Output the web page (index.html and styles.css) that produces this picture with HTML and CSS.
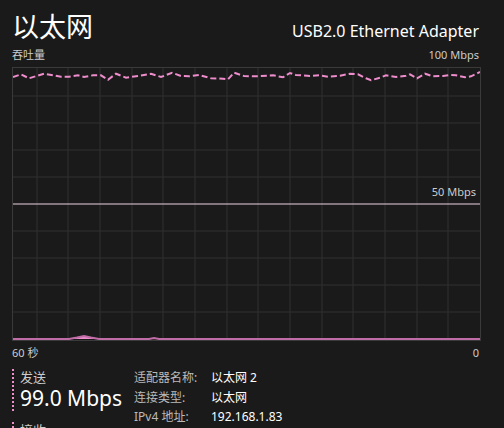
FILE: index.html
```html
<!DOCTYPE html>
<html lang="zh-CN">
<head>
    <meta charset="UTF-8">
    <title>以太网</title>
    <link rel="stylesheet" href="styles.css">
</head>
<body>
    <div class="panel">
        <div class="header">
            <h1>以太网</h1>
            <div class="adapter">USB2.0 Ethernet Adapter</div>
        </div>
        <div class="axis-top">
            <span>吞吐量</span>
            <span>100 Mbps</span>
        </div>
        <div class="graph">
            <svg width="467" height="272" viewBox="0 0 467 272">
                <g class="grid">
                    <line x1="24" y1="0" x2="24" y2="272"/>
                    <line x1="55" y1="0" x2="55" y2="272"/>
                    <line x1="87" y1="0" x2="87" y2="272"/>
                    <line x1="119" y1="0" x2="119" y2="272"/>
                    <line x1="150" y1="0" x2="150" y2="272"/>
                    <line x1="182" y1="0" x2="182" y2="272"/>
                    <line x1="214" y1="0" x2="214" y2="272"/>
                    <line x1="245" y1="0" x2="245" y2="272"/>
                    <line x1="277" y1="0" x2="277" y2="272"/>
                    <line x1="309" y1="0" x2="309" y2="272"/>
                    <line x1="340" y1="0" x2="340" y2="272"/>
                    <line x1="372" y1="0" x2="372" y2="272"/>
                    <line x1="404" y1="0" x2="404" y2="272"/>
                    <line x1="435" y1="0" x2="435" y2="272"/>
                    <line x1="0" y1="28" x2="467" y2="28"/>
                    <line x1="0" y1="55" x2="467" y2="55"/>
                    <line x1="0" y1="82" x2="467" y2="82"/>
                    <line x1="0" y1="109" x2="467" y2="109"/>
                    <line x1="0" y1="163" x2="467" y2="163"/>
                    <line x1="0" y1="190" x2="467" y2="190"/>
                    <line x1="0" y1="217" x2="467" y2="217"/>
                    <line x1="0" y1="244" x2="467" y2="244"/>
                </g>
                <line class="scale" x1="0" y1="136" x2="467" y2="136"/>
                <!-- send: flat near zero with two small spikes -->
                <path class="send-fill" d="M56 271 L64 269.5 L71 268 L78 269.5 L86 271 Z M136 271 L141 270 L146 271 Z"/>
                <polyline class="send" points="0,271 56,271 64,269.5 71,268 78,269.5 86,271 136,271 141,270 146,271 467,271"/>
                <!-- receive: dashed around 95 Mbps -->
                <polyline class="recv" points="0,9 8,6.3 16,10.3 31,5.7 48,8.7 56,8.7 65,7.3 71,9 80,7.3 88,7.3 95,11.7 103,5.7 113,9.7 125,8 138,5.7 148,9 159,4.7 168,8 176,8.3 186,7 198,10.3 210,10.7 215,11.3 221,4.7 231,8 242,8.3 260,7.3 270,9.3 277,5 283,7 297,8 307,7.3 315,8.7 327,7.7 337,5.7 345,6.3 353,10.3 358,12.3 367,9.7 373,7.3 383,9 393,7.7 397,6.3 404,10.3 412,5.7 420,8.3 430,8 437,7 443,7.3 452,9.3 458,8.3 467,4"/>
            </svg>
            <span class="mid-label">50 Mbps</span>
        </div>
        <div class="axis-bottom">
            <span>60 秒</span>
            <span>0</span>
        </div>
        <div class="stats">
            <div class="rates">
                <div class="rate">
                    <div class="rate-label">发送</div>
                    <div class="rate-value">99.0 Mbps</div>
                </div>
                <div class="rate">
                    <div class="rate-label">接收</div>
                    <div class="rate-value">1.2 Mbps</div>
                </div>
            </div>
            <dl class="props">
                <dt>适配器名称:</dt><dd>以太网 2</dd>
                <dt>连接类型:</dt><dd>以太网</dd>
                <dt>IPv4 地址:</dt><dd>192.168.1.83</dd>
            </dl>
        </div>
    </div>
</body>
</html>
```

FILE: styles.css
```css
html, body {
    margin: 0;
    height: 100%;
    overflow: hidden;
}
body {
    background-color: #1a1a1a;
    color: #ffffff;
    font-family: "Segoe UI", "Noto Sans", "Noto Sans CJK SC", sans-serif;
}
.panel {
    padding: 10px 25px 0 12px;
}
.header {
    display: flex;
    justify-content: space-between;
    align-items: baseline;
}
h1 {
    margin: 0;
    font-size: 27px;
    font-weight: normal;
    line-height: 34px;
}
.adapter {
    font-size: 16px;
    color: #ffffff;
}
.axis-top, .axis-bottom {
    display: flex;
    justify-content: space-between;
    font-size: 11px;
    color: #cccccc;
    line-height: 14px;
}
.axis-top {
    margin-top: 4px;
    margin-bottom: 5px;
}
.axis-bottom {
    margin-top: 5px;
}
.graph {
    position: relative;
    width: 467px;
    height: 272px;
    border: 1px solid #3a3a3a;
}
.graph svg {
    display: block;
}
.grid line {
    stroke: #303030;
    stroke-width: 1;
}
.scale {
    stroke: #ecd3e3;
    stroke-width: 1;
}
.recv {
    fill: none;
    stroke: #ee8ccc;
    stroke-width: 2;
    stroke-dasharray: 6 3;
}
.send {
    fill: none;
    stroke: #c06ca6;
    stroke-width: 2;
}
.send-fill {
    fill: #ee8ccc;
}
.mid-label {
    position: absolute;
    right: 4px;
    top: 116px;
    font-size: 11px;
    color: #cccccc;
}
.stats {
    display: flex;
    align-items: flex-start;
    margin-top: 9px;
}
.rates {
    width: 122px;
    display: flex;
    flex-direction: column;
    gap: 11px;
}
.rate {
    border-left: 2px dotted #ee8ccc;
    padding-left: 6px;
}
.rate-label {
    font-size: 13px;
    color: #cccccc;
    line-height: 16px;
}
.rate-value {
    font-size: 21px;
    line-height: 26px;
}
.props {
    margin: 0;
    display: grid;
    grid-template-columns: 77px auto;
    align-content: start;
    row-gap: 2px;
    font-size: 12px;
    line-height: 17.5px;
}
.props dt {
    color: #bbbbbb;
}
.props dd {
    margin: 0;
    color: #ffffff;
}
```
